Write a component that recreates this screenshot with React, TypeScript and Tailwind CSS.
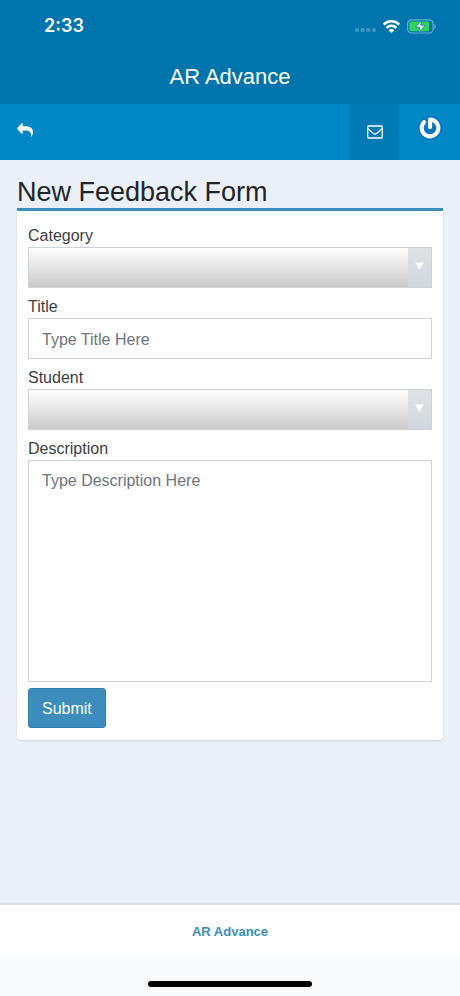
import React from "react";

function StatusBar() {
  return (
    <div className="flex h-[52px] items-center justify-between pr-6 pl-11 text-white">
      <time className="font-[Inter,sans-serif] text-lg leading-none font-semibold">2:33</time>
      <div className="flex items-center gap-[7px]">
        <svg width="21" height="4" viewBox="0 0 21 4" fill="#3c96c4" className="mt-2" aria-hidden="true">
          <rect x="0" y="0" width="4" height="4" rx="1.5" />
          <rect x="5.6" y="0" width="4" height="4" rx="1.5" />
          <rect x="11.2" y="0" width="4" height="4" rx="1.5" />
          <rect x="16.8" y="0" width="4" height="4" rx="1.5" />
        </svg>
        <svg width="17" height="13" viewBox="0 0 17 13" fill="none" stroke="currentColor" strokeWidth="2.5" aria-hidden="true">
          <path d="M.8 4.500C5 .300 12 .300 16.200 4.500" />
          <path d="M3.600 7.800c2.800-2.800 7-2.800 9.800 0" />
          <path d="M8.500 13 5.600 10.200c1.500-1.500 4.300-1.500 5.800 0z" fill="currentColor" stroke="none" />
        </svg>
        <svg width="29" height="15" viewBox="0 0 29 15" aria-hidden="true">
          <rect x=".6" y=".8" width="25.500" height="13.200" rx="4" fill="none" stroke="#67acd3" strokeWidth="1.200" />
          <path d="M27.400 5v5c1.800-.8 1.800-4.200 0-5z" fill="#67acd3" />
          <rect x="2.400" y="2.500" width="19.800" height="9.800" rx="2" fill="#32d15c" />
          <path d="M15 1 8.600 8.300h4.300L11.500 14l6.700-7.800h-4.500z" fill="#fff" stroke="#0876ae" strokeWidth=".8" />
        </svg>
      </div>
    </div>
  );
}

function NavBar() {
  return (
    <nav className="flex h-14 items-stretch bg-[#0088c6] text-white">
      <button type="button" aria-label="Back" className="flex w-[50px] items-center justify-center pb-1">
        <svg width="16" height="14" viewBox="0 0 16 14" fill="currentColor" aria-hidden="true">
          <path d="M5.700.5v2.700h2c5 0 8.300 1.500 8.300 6 0 1.300-.6 3-1.300 4.300-.3.500-.8.500-.7-.2.500-4.200-1.500-5.700-6.300-5.700h-2v2.700c0 .7-.5.900-1 .4L.3 6.100a.9.900 0 0 1 0-1.200L4.700.2c.5-.5 1-.3 1 .3z" />
        </svg>
      </button>
      <div className="flex-1" />
      <button type="button" aria-label="Messages" className="flex w-[49px] items-center justify-center bg-[#007ab3]">
        <svg width="16" height="14" viewBox="0 0 16 14" fill="none" stroke="currentColor" strokeWidth="1.300" aria-hidden="true">
          <rect x=".7" y="1" width="14.600" height="12" rx="1" />
          <path d="M.8 3.300c1.800 2.200 3.800 3.600 5.800 5.200.9.700 1.900.7 2.800 0 2-1.600 4-3 5.800-5.200" />
        </svg>
      </button>
      <button type="button" aria-label="Account" className="flex w-[61px] items-center justify-center pb-2">
        <svg width="26" height="26" viewBox="-3 -3 30 30" aria-hidden="true">
          <circle cx="12" cy="12" r="14" fill="#0a77bf" />
          <path
            fill="#fff"
            d="M12 0c-1.326 0-2.400 1.074-2.400 2.400v8.400c0 1.324 1.074 2.398 2.400 2.398s2.400-1.074 2.400-2.398V5.210c2.795.99 4.799 3.654 4.799 6.789 0 3.975-3.225 7.199-7.199 7.199S4.801 15.975 4.801 12c0-1.989.805-3.789 2.108-5.091.938-.938.938-2.458 0-3.396s-2.458-.938-3.396 0C1.344 5.686 0 8.686 0 12c0 6.627 5.373 12 12 12s12-5.373 12-12S18.627 0 12 0"
          />
        </svg>
      </button>
    </nav>
  );
}

function Field({ id, label, children }: { id: string; label: string; children: React.ReactNode }) {
  return (
    <div className="flex flex-col">
      <label htmlFor={id} className="h-6 text-base leading-[26px]">
        {label}
      </label>
      {children}
    </div>
  );
}

function Dropdown({ id }: { id: string }) {
  return (
    <div className="relative h-[41px] border border-[#d0d3d6]">
      <select
        id={id}
        defaultValue=""
        className="block h-full w-full appearance-none bg-linear-to-b from-white to-[#cacaca] px-3 text-base"
      >
        <option value=""></option>
      </select>
      <span className="pointer-events-none absolute inset-y-0 right-0 flex w-[23px] items-center justify-center bg-linear-to-b from-[#dfe2e5] to-[#d2d7de]">
        <svg width="9" height="8" viewBox="0 0 9 8" className="mb-1" aria-hidden="true">
          <path d="M.2.500h8.600L4.500 7.800z" fill="#fff" />
        </svg>
      </span>
    </div>
  );
}

export default function App() {
  return (
    <div className="flex min-h-screen flex-col bg-[#ebeff7] font-['Liberation_Sans',Arial,sans-serif] text-[#3b3e42]">
      <header>
        <div className="h-[104px] bg-[#0075ad]">
          <StatusBar />
          <div className="flex h-12 items-center justify-center text-[22px] text-white">AR Advance</div>
        </div>
        <NavBar />
      </header>

      <main className="flex-1 px-[17px] pt-4">
        <h1 className="text-[27px] leading-8 text-[#212529]">New Feedback Form</h1>
        <form
          onSubmit={(event) => event.preventDefault()}
          className="flex flex-col gap-[6px] rounded-b-[4px] border-t-[3px] border-[#3c8dbc] bg-white px-[11px] py-3 shadow-[0_1px_2px_rgba(0,0,0,0.12)]"
        >
          <Field id="category" label="Category">
            <Dropdown id="category" />
          </Field>
          <Field id="title" label="Title">
            <input
              id="title"
              type="text"
              placeholder="Type Title Here"
              className="h-[41px] border border-[#d0d3d6] px-[13px] pt-[2px] text-base placeholder:text-[#6c757d]"
            />
          </Field>
          <Field id="student" label="Student">
            <Dropdown id="student" />
          </Field>
          <Field id="description" label="Description">
            <textarea
              id="description"
              placeholder="Type Description Here"
              className="block h-[222px] resize-none border border-[#d0d3d6] px-[13px] py-2 text-base leading-6 placeholder:text-[#6c757d]"
            />
          </Field>
          <button
            type="submit"
            className="h-10 self-start rounded-[3px] border border-[#367fa9] bg-[#3c8dbc] px-[13px] pt-[2px] text-base text-white"
          >
            Submit
          </button>
        </form>
      </main>

      <footer className="border-t-2 border-[#dcdfe5] bg-white">
        <div className="flex h-[51px] items-center justify-center pt-[2px]">
          <a href="#" className="text-[13px] font-bold text-[#3c8dbc]">
            AR Advance
          </a>
        </div>
        <div className="flex h-10 items-end justify-center bg-[#f9fafc] pb-[9px]">
          <div className="h-[6px] w-[164px] rounded-full bg-black" />
        </div>
      </footer>
    </div>
  );
}
